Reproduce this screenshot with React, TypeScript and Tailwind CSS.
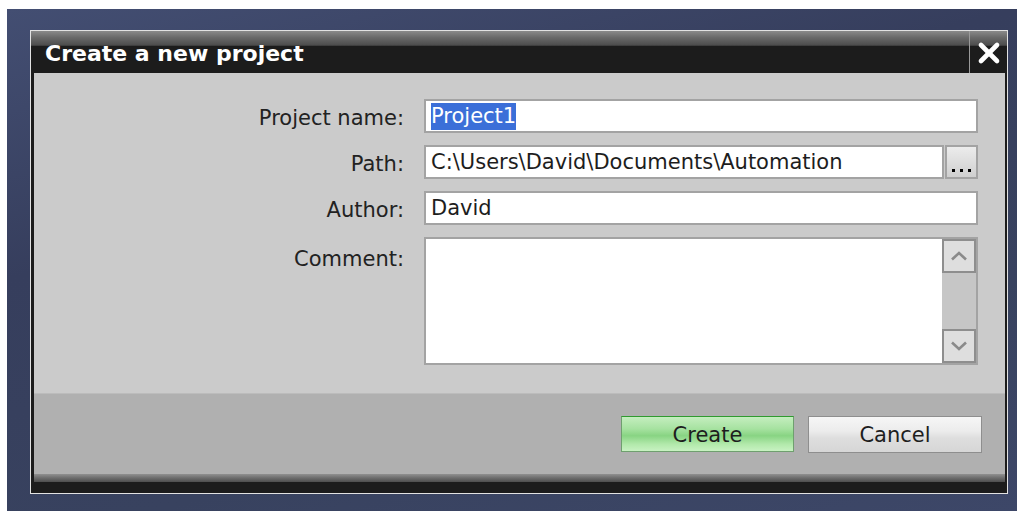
import { X } from "lucide-react";

const font = "font-['DejaVu_Sans',sans-serif]";

function Field({ children }: { children: React.ReactNode }) {
  return (
    <div className="flex h-[34px] items-center border-2 border-[#a3a3a3] bg-white px-[5px] pt-[1px] text-[21px] leading-none text-[#1d1d1d]">
      {children}
    </div>
  );
}

function Label({ text, top }: { text: string; top?: boolean }) {
  return (
    <div
      className={`flex justify-end text-[21px] leading-none text-[#222] ${
        top ? "items-start pt-[12px]" : "items-center pt-[5px]"
      }`}
    >
      {text}
    </div>
  );
}

function ScrollButton({ up }: { up?: boolean }) {
  return (
    <div className="flex h-[34px] items-center justify-center border-2 border-[#8e8e8e] bg-[#dedede]">
      <svg width="18" height="10" viewBox="0 0 18 10" fill="none">
        <path
          d={up ? "M2 8.5 9 2l7 6.5" : "M2 1.5 9 8l7-6.5"}
          stroke="#8a8a8a"
          strokeWidth="2.6"
        />
      </svg>
    </div>
  );
}

export default function App() {
  return (
    <div className={`h-[511px] w-[1017px] bg-white pl-[7px] pt-[9px] ${font}`}>
      <div className="h-full bg-[linear-gradient(165deg,#434e72_0%,#363e5d_35%,#38425f_70%,#3d4768_100%)] pb-[17px] pl-[23px] pr-[9px] pt-[21px]">
        <div className="flex h-[464px] w-[978px] flex-col border border-[#e2e2e2] bg-[#1c1c1c]">
          {/* title bar */}
          <div className="flex h-[42px] bg-[linear-gradient(to_bottom,#8a8a8a_0%,#6a6a6a_15%,#4c4c4c_34%,#1c1c1c_36%,#1c1c1c_100%)]">
            <div className="flex flex-1 items-center pl-[14px] pt-[2px] text-[22px] font-bold text-white">
              Create a new project
            </div>
            <div className="flex w-[38px] items-center justify-center border-l border-[#9a9a9a] pt-[2px]">
              <X className="h-[32px] w-[32px] text-white" strokeWidth={3.5} />
            </div>
          </div>

          <div className="ml-[3px] mr-[2px] flex flex-1 flex-col">
            {/* form */}
            <div className="grid h-[320px] grid-cols-[370px_1fr] content-start gap-x-[20px] gap-y-[12px] bg-[#cbcbcb] pr-[27px] pt-[26px]">
              <Label text="Project name:" />
              <Field>
                <span className="bg-[#3b6fd8] py-[3px] text-white">Project1</span>
              </Field>

              <Label text="Path:" />
              <div className="flex h-[34px]">
                <div className="flex flex-1 items-center border-2 border-[#a3a3a3] bg-white px-[5px] pt-[1px] text-[21px] leading-none text-[#1d1d1d]">
                  C:\Users\David\Documents\Automation
                </div>
                <div className="ml-[1px] flex w-[33px] items-end justify-center gap-[5px] border-2 border-[#a3a3a3] bg-[linear-gradient(to_bottom,#ececec,#cfcfcf)] pb-[5px]">
                  <span className="h-[3px] w-[3px] bg-black" />
                  <span className="h-[3px] w-[3px] bg-black" />
                  <span className="h-[3px] w-[3px] bg-black" />
                </div>
              </div>

              <Label text="Author:" />
              <Field>David</Field>

              <Label text="Comment:" top />
              <div className="flex h-[128px] border-2 border-[#a3a3a3] bg-white">
                <div className="flex-1" />
                <div className="flex w-[34px] flex-col bg-[#c6c6c6]">
                  <ScrollButton up />
                  <div className="flex-1" />
                  <ScrollButton />
                </div>
              </div>
            </div>

            {/* footer */}
            <div className="flex h-[81px] items-center justify-end gap-[14px] border-t border-[#bcbcbc] bg-[#b0b0b0] pr-[23px]">
              <button className="h-[36px] w-[173px] border border-[#6f9f6f] border-t-[#2f9a2f] bg-[linear-gradient(to_bottom,#c4eebf_0%,#a6e2a0_35%,#88d483_55%,#b2e9ab_80%,#c8f2c2_100%)] pt-[2px] text-[21px] leading-none text-[#1e1e1e]">
                Create
              </button>
              <button className="h-[37px] w-[174px] border border-[#8e8e8e] bg-[linear-gradient(to_bottom,#f6f6f6_0%,#ececec_40%,#dedede_60%,#d6d6d6_100%)] pt-[2px] text-[21px] leading-none text-[#1e1e1e]">
                Cancel
              </button>
            </div>

            <div className="h-[8px] bg-[linear-gradient(to_bottom,#909090,#6c6c6c_50%,#4e4e4e)]" />
          </div>
          <div className="h-[11px]" />
        </div>
      </div>
    </div>
  );
}
